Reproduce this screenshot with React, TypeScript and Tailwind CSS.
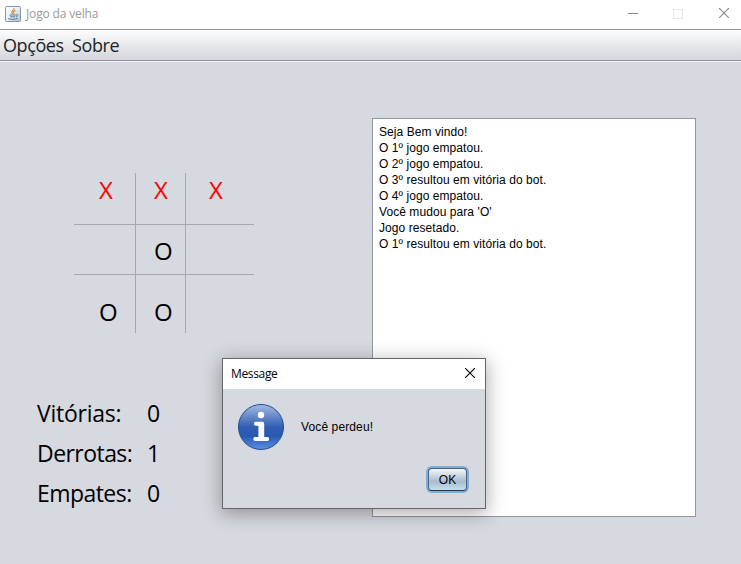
import React from "react";

const log = [
  "Seja Bem vindo!",
  "O 1º jogo empatou.",
  "O 2º jogo empatou.",
  "O 3º resultou em vitória do bot.",
  "O 4º jogo empatou.",
  "Você mudou para 'O'",
  "Jogo resetado.",
  "O 1º resultou em vitória do bot.",
];

const scores = [
  { label: "Vitórias:", value: 0, tracking: "tracking-[-0.25px]" },
  { label: "Derrotas:", value: 1, tracking: "tracking-[-0.55px]" },
  { label: "Empates:", value: 0, tracking: "tracking-[-0.55px]" },
];

const cells = [
  { mark: "X", box: "border-r border-b pl-[25px]" },
  { mark: "X", box: "border-r border-b pl-[18px]" },
  { mark: "X", box: "border-b pl-[23px]" },
  { mark: "", box: "border-r border-b" },
  { mark: "O", box: "border-r border-b pl-[18px] pt-[9px]" },
  { mark: "", box: "border-b" },
  { mark: "O", box: "border-r pl-[25px] pt-[20px]" },
  { mark: "O", box: "border-r pl-[18px] pt-[20px]" },
  { mark: "", box: "" },
];

function JavaIcon() {
  return (
    <svg width="16" height="16" viewBox="0 0 16 16">
      <defs>
        <linearGradient id="java" x1="0" y1="0" x2="1" y2="1">
          <stop offset="0" stopColor="#fff" />
          <stop offset=".5" stopColor="#e6edf3" />
          <stop offset="1" stopColor="#a9bdcd" />
        </linearGradient>
      </defs>
      <rect x=".5" y=".5" width="15" height="15" rx="1" fill="url(#java)" stroke="#8399aa" />
      <path d="M9 2.2C9.4 4 6.2 4.8 6.8 6.6L7.8 8M10.6 4.4C8.8 5 7.8 5.8 9 7.6" fill="none" stroke="#e8832e" strokeWidth="1.2" />
      <path d="M4.4 9h6.4M5.2 10.8h4.8M11 8.8c2.4-.6 2 1.7-.2 2M3.2 12.6c2.5 1 7.3.9 9.4-.2" fill="none" stroke="#46729a" strokeWidth=".95" />
    </svg>
  );
}

function InfoIcon() {
  return (
    <svg width="48" height="48" viewBox="0 0 48 48">
      <defs>
        <linearGradient id="info" x1="0" y1="0" x2="0" y2="1">
          <stop offset="0" stopColor="#a3b9e2" />
          <stop offset=".25" stopColor="#6b8ccb" />
          <stop offset=".5" stopColor="#305fb3" />
          <stop offset=".7" stopColor="#2858b2" />
          <stop offset="1" stopColor="#5b90ea" />
        </linearGradient>
      </defs>
      <circle cx="24" cy="24" r="22.5" fill="url(#info)" stroke="#244b96" />
      <circle cx="24" cy="12" r="3.2" fill="#fff" />
      <path d="M18.7 18.8h6.6q1.9 0 1.9 1.9v13.2h3.2q1.7 0 1.7 2t-1.7 2H18.1q-1.8 0-1.8-2t1.8-2h3.3V22.8h-2.7q-1.8 0-1.8-2t1.8-2Z" fill="#fff" />
    </svg>
  );
}

function CloseIcon() {
  return (
    <svg width="10" height="10" viewBox="0 0 10 10" stroke="currentColor" fill="none">
      <path d="M0 0L10 10M10 0L0 10" strokeWidth="1.1" />
    </svg>
  );
}

function MessageDialog() {
  return (
    <div className="absolute left-[222px] top-[358px] flex h-[151px] w-[264px] flex-col border border-[#65666a] bg-[#d6d9df] shadow-[0_4px_18px_1px_rgba(0,0,0,0.32)]">
      <div className="flex h-[30px] items-center justify-between bg-white pl-2 pr-[10px]">
        <span className="font-['Open_Sans',sans-serif] text-[12px] tracking-[-0.35px]">Message</span>
        <span className="flex pb-[3px]"><CloseIcon /></span>
      </div>
      <div className="flex h-[77px] items-start pl-[14px] pt-[14px]">
        <InfoIcon />
        <span className="ml-4 mt-4 text-[12px] leading-4 tracking-[0.12px]">Você perdeu!</span>
      </div>
      <div className="flex justify-end pr-4">
        <button className="h-[27px] w-[43px] rounded-[6px] bg-[#7fadd6] p-[2px]">
          <span className="flex h-full items-center justify-center rounded-[4px] border border-[#48647e] border-b-[#22384c] bg-linear-to-b from-[#f3f6f8] via-[#a7bccd] via-60% to-[#c9deed] text-[12px]">OK</span>
        </button>
      </div>
    </div>
  );
}

export default function App() {
  return (
    <div className="relative flex h-[564px] w-[741px] flex-col overflow-hidden bg-[#d6d9df] font-['Liberation_Sans',Arial,sans-serif] text-black">
      <header className="flex h-[29px] items-center bg-white pl-[5px] pr-3 pb-[2px]">
        <JavaIcon />
        <span className="ml-[5px] mt-[1px] font-['Open_Sans',sans-serif] text-[12px] tracking-[-0.15px] text-[#999]">Jogo da velha</span>
        <div className="ml-auto flex items-center text-[#888]">
          <span className="mr-[35px] h-px w-[10px] bg-[#888]" />
          <span className="mr-[36px] h-[10px] w-[10px] border border-[#e7e7e7]" />
          <span className="flex pb-px"><CloseIcon /></span>
        </div>
      </header>
      <nav className="flex h-[32px] items-center gap-[8px] border-y border-[#919398] bg-linear-to-b from-[#fdfdfd] to-[#d6d9df] to-90% pl-[3px] font-['Open_Sans',sans-serif] text-[18px] text-[#222]">
        <span className="w-[61px] tracking-[-0.4px]">Opções</span>
        <span className="tracking-[-0.4px]">Sobre</span>
      </nav>
      <div className="h-px bg-[#f4f5f7]" />
      <main className="flex flex-1 items-start">
        <section className="w-[372px] pt-[111px]">
          <div className="ml-[74px] grid w-[180px] grid-cols-[62px_50px_68px] grid-rows-[52px_50px_58px] font-['Open_Sans',sans-serif] text-[24px] leading-[33px]">
            {cells.map((c, i) => (
              <div key={i} className={`border-[#a4a8b1] ${c.box} ${c.mark === "X" ? "text-[#f00]" : "text-black"}`}>{c.mark}</div>
            ))}
          </div>
          <div className="ml-[37px] mt-[60px] flex flex-col font-['Open_Sans',sans-serif] text-[23px] leading-[40px]">
            {scores.map((s) => (
              <div key={s.label} className="flex">
                <span className={`w-[110px] ${s.tracking}`}>{s.label}</span>
                <span>{s.value}</span>
              </div>
            ))}
          </div>
        </section>
        <section className="mt-[56px] h-[399px] w-[324px] border border-[#9297a1] bg-white pl-[6px] pt-[5px] text-[12px] leading-4 tracking-[0.07px]">
          {log.map((line, i) => (
            <p key={i}>{line}</p>
          ))}
        </section>
      </main>
      <MessageDialog />
    </div>
  );
}
